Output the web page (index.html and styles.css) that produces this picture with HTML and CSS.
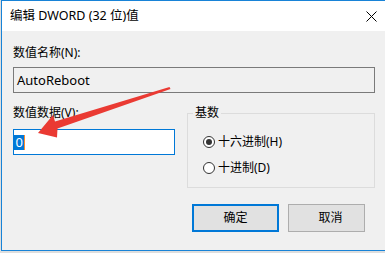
FILE: index.html
```html
<!DOCTYPE html>
<html lang="zh-CN">
<head>
<meta charset="utf-8">
<title>编辑 DWORD (32 位)值</title>
<link rel="stylesheet" href="styles.css">
</head>
<body>
<div class="window">
  <div class="titlebar">
    <span class="title">编辑 DWORD (32 位)值</span>
    <svg class="close" width="11" height="11" viewBox="0 0 11 11"><path d="M0.5 0.5 L10.5 10.5 M10.5 0.5 L0.5 10.5" stroke="#000" stroke-width="1" fill="none"/></svg>
  </div>
  <div class="content">
    <div class="label">数值名称(N):</div>
    <div class="field readonly">AutoReboot</div>
    <div class="row">
      <div class="col">
        <div class="label label2">数值数据(V):</div>
        <div class="field active"><span class="sel">0</span><span class="caret"></span></div>
      </div>
      <fieldset class="group">
        <legend>基数</legend>
        <div class="radio first"><span class="dot checked"></span><span>十六进制(H)</span></div>
        <div class="radio second"><span class="dot"></span><span>十进制(D)</span></div>
      </fieldset>
    </div>
    <div class="buttons">
      <div class="btn default">确定</div>
      <div class="btn cancel">取消</div>
    </div>
  </div>
</div>
<svg class="arrow" width="385" height="253" viewBox="0 0 385 253">
  <polygon points="38,133 57,137.5 57.5,128.5 170.5,89 169.5,87 55,121.5 53,115" fill="#ea3a33"/>
</svg>
</body>
</html>
```

FILE: styles.css
```css
html {
  background: #dedede;
}
body {
  margin: 0;
  position: relative;
  width: 385px;
  height: 253px;
  overflow: hidden;
  font-family: "Noto Sans", "Noto Sans CJK SC", sans-serif;
  font-size: 12px;
  color: #000;
}
.window {
  margin-left: 1px;
  width: 384px;
  border: 1px solid #1883d7;
  border-right: none;
  box-sizing: border-box;
  height: 251px;
  display: flex;
  flex-direction: column;
}
.titlebar {
  height: 30px;
  background: #fff;
  display: flex;
  align-items: center;
  justify-content: space-between;
  padding-left: 8px;
  padding-right: 8px;
  flex: none;
}
.title {
  font-size: 12.5px;
  line-height: 16px;
}
.close {
  display: block;
}
.content {
  flex: 1;
  background: #f0f0f0;
  padding: 14px 10px 0 11px;
}
.label {
  line-height: 16px;
  height: 16px;
}
.field {
  height: 26px;
  box-sizing: border-box;
  border: 1px solid #7a7a7a;
  display: flex;
  align-items: center;
}
.readonly {
  margin-top: 6px;
  background: #f0f0f0;
  padding-left: 3px;
  font-size: 13px;
  line-height: 24px;
}
.row {
  display: flex;
  align-items: flex-start;
}
.col {
  width: 162px;
}
.label2 {
  margin-top: 12px;
}
.active {
  margin-top: 8px;
  border-color: #0078d7;
  background: #fff;
  font-size: 13px;
}
.sel {
  background: #0078d7;
  color: #fff;
  line-height: 15px;
  height: 15px;
  padding: 0 1.5px;
}
.caret {
  width: 1px;
  height: 15px;
  background: #ff8a2a;
}
.group {
  margin: 12px 0 0 12px;
  width: 188px;
  height: 83px;
  box-sizing: border-box;
  border: 1px solid #dcdcdc;
  padding: 0 0 0 5px;
  min-width: 0;
}
.group legend {
  padding: 0 2px;
  line-height: 16px;
}
.radio {
  display: flex;
  align-items: center;
  height: 16px;
  line-height: 16px;
  margin-left: 10px;
}
.radio.first {
  margin-top: 13px;
}
.radio.second {
  margin-top: 10px;
}
.dot {
  width: 12px;
  height: 12px;
  box-sizing: border-box;
  border: 1px solid #333;
  border-radius: 50%;
  background: #fff;
  margin-right: 3px;
  display: flex;
  align-items: center;
  justify-content: center;
}
.dot.checked::after {
  content: "";
  width: 6px;
  height: 6px;
  border-radius: 50%;
  background: #333;
}
.buttons {
  margin-top: 16px;
  display: flex;
  justify-content: flex-end;
  gap: 9px;
  padding-right: 10px;
}
.btn {
  height: 28px;
  box-sizing: border-box;
  background: #e1e1e1;
  border: 1px solid #adadad;
  display: flex;
  align-items: center;
  justify-content: center;
  line-height: 16px;
}
.btn.default {
  width: 87px;
  border: 2px solid #0078d7;
}
.btn.cancel {
  width: 77px;
  padding-left: 8px;
}
.arrow {
  position: absolute;
  left: 0;
  top: 0;
  pointer-events: none;
}
```
